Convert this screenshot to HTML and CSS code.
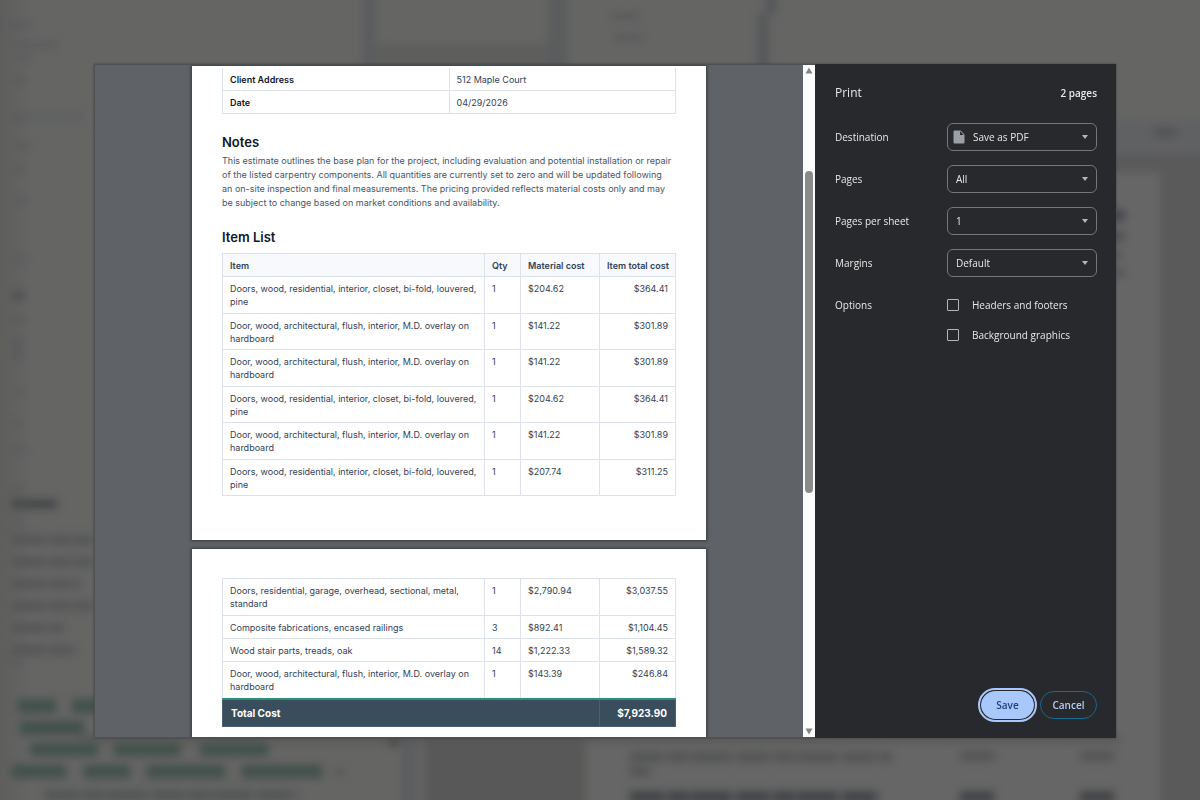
FILE: index.html
```html
<!DOCTYPE html>
<html lang="en">
<head>
<meta charset="utf-8">
<title>Print</title>
<meta name="viewport" content="width=device-width, initial-scale=1">
<link rel="stylesheet" href="styles.css">
</head>
<body>
<svg class="backdrop" viewBox="0 0 1200 800" preserveAspectRatio="none" aria-hidden="true">
  <defs>
    <filter id="soft" x="-10%" y="-10%" width="120%" height="120%" color-interpolation-filters="sRGB"><feGaussianBlur stdDeviation="4"/></filter>
    <linearGradient id="edge"><stop offset="0" stop-color="#5e5e5d"/><stop offset="1" stop-color="#656564"/></linearGradient>
  </defs>
  <rect width="1200" height="800" fill="#656564"/>
  <rect width="30" height="800" fill="url(#edge)"/>
  <g filter="url(#soft)">
    <rect x="362" y="-10" width="14" height="90" fill="#5b5d5e"/>
    <rect x="376" y="44" width="180" height="40" fill="#5e5e5d"/>
    <rect x="548" y="-10" width="20" height="90" fill="#5a5c5d"/>
    <rect x="758" y="14" width="10" height="66" fill="#545658"/>
    <rect x="766" y="-10" width="10" height="24" fill="#545658"/>
    <rect x="1100" y="120" width="120" height="34" fill="#606163"/>
    <rect x="1100" y="154" width="120" height="700" fill="#5a5a5a"/>
    <rect x="1080" y="172" width="80" height="700" fill="#666"/>
    <rect x="1154" y="128" width="22" height="9" fill="#525355"/>
    <rect x="1110" y="210" width="15" height="11" fill="#43454a"/>
    <rect x="1110" y="232" width="15" height="9" fill="#4b4d52"/>
    <rect x="1110" y="251" width="12" height="8" fill="#555457"/>
    <rect x="1110" y="269" width="15" height="8" fill="#555457"/>
    <rect x="402" y="700" width="16" height="110" fill="#5c5e61"/>
    <rect x="425" y="700" width="160" height="110" fill="#585858"/>
    <rect x="592" y="700" width="562" height="110" fill="#666"/>
    <rect x="80" y="736" width="1040" height="6" fill="#555"/>
  </g>
  <g filter="url(#soft)" fill="#5a5b5c">
    <rect x="2" y="22" width="30" height="6"/><rect x="12" y="42" width="45" height="6"/><rect x="12" y="56" width="20" height="5"/>
    <rect x="612" y="13" width="28" height="7"/><rect x="614" y="34" width="30" height="7"/>
    <rect x="12" y="77" width="14" height="6"/><rect x="12" y="112" width="72" height="10" fill="#606163"/>
    <rect x="12" y="114" width="14" height="8"/><rect x="13" y="143" width="18" height="6"/>
    <rect x="12" y="165" width="12" height="7"/><rect x="13" y="198" width="15" height="6"/>
    <rect x="12" y="256" width="16" height="6"/><rect x="12" y="291" width="13" height="9" fill="#4f5052"/>
    <rect x="12" y="316" width="13" height="8"/><rect x="12" y="336" width="10" height="25"/>
    <rect x="12" y="388" width="12" height="6"/><rect x="12" y="422" width="10" height="6"/>
    <rect x="12" y="447" width="16" height="6"/><rect x="12" y="485" width="12" height="6"/>
    <rect x="12" y="520" width="10" height="6"/><rect x="12" y="660" width="10" height="7"/>
  </g>
  <g filter="url(#soft)" fill="none" stroke-width="9" stroke-dasharray="34 3 22 2 41 4">
    <path d="M12 504H57" stroke="#434547" stroke-dasharray="none"/>
    <path d="M12 540H93M12 562H93M12 584H80M12 606H93M12 628H64M12 650H76" stroke="#545556"/>
    <path d="M45 795H298" stroke="#505254"/>
    <path d="M630 757H892M630 771H650M960 756H998M1080 756H1116" stroke="#525354"/>
    <path d="M630 797H880M960 797H994M1080 797H1116" stroke="#3f4144" stroke-width="11"/>
  </g>
  <g filter="url(#soft)" fill="#41504b">
    <rect x="18" y="699" width="38" height="14"/><rect x="72" y="699" width="30" height="14"/>
    <rect x="20" y="721" width="64" height="14"/>
    <rect x="30" y="743" width="68" height="13"/><rect x="114" y="743" width="66" height="13"/><rect x="200" y="743" width="68" height="13"/>
    <rect x="12" y="765" width="54" height="13"/><rect x="84" y="765" width="46" height="13"/><rect x="147" y="765" width="78" height="13"/><rect x="242" y="765" width="80" height="13"/>
    <rect x="336" y="769" width="7" height="6" fill="#505253"/><rect x="390" y="738" width="8" height="8" fill="#444"/>
  </g>
</svg>

<main class="stage">
  <div class="dialog" role="dialog" aria-modal="true" aria-labelledby="dialog-title">
    <section class="preview" aria-label="Print preview">
      <div class="sheets">
        <article class="sheet sheet-first">
          <table class="details">
            <tbody>
              <tr><th scope="row">Client Address</th><td>512 Maple Court</td></tr>
              <tr><th scope="row">Date</th><td>04/29/2026</td></tr>
            </tbody>
          </table>
          <h2 class="heading">Notes</h2>
          <p class="notes">This estimate outlines the base plan for the project, including evaluation and potential installation or repair<br>of the listed carpentry components. All quantities are currently set to zero and will be updated following<br>an on-site inspection and final measurements. The pricing provided reflects material costs only and may<br>be subject to change based on market conditions and availability.</p>
          <h2 class="heading heading-list">Item List</h2>
          <table class="items items-first">
            <colgroup><col class="col-item"><col class="col-qty"><col class="col-cost"><col class="col-total"></colgroup>
            <thead>
              <tr><th scope="col">Item</th><th scope="col">Qty</th><th scope="col">Material cost</th><th scope="col" class="amount">Item total cost</th></tr>
            </thead>
            <tbody>
              <tr><td>Doors, wood, residential, interior, closet, bi-fold, louvered,<br>pine</td><td>1</td><td>$204.62</td><td class="amount">$364.41</td></tr>
              <tr><td>Door, wood, architectural, flush, interior, M.D. overlay on<br>hardboard</td><td>1</td><td>$141.22</td><td class="amount">$301.89</td></tr>
              <tr><td>Door, wood, architectural, flush, interior, M.D. overlay on<br>hardboard</td><td>1</td><td>$141.22</td><td class="amount">$301.89</td></tr>
              <tr><td>Doors, wood, residential, interior, closet, bi-fold, louvered,<br>pine</td><td>1</td><td>$204.62</td><td class="amount">$364.41</td></tr>
              <tr><td>Door, wood, architectural, flush, interior, M.D. overlay on<br>hardboard</td><td>1</td><td>$141.22</td><td class="amount">$301.89</td></tr>
              <tr><td>Doors, wood, residential, interior, closet, bi-fold, louvered,<br>pine</td><td>1</td><td>$207.74</td><td class="amount">$311.25</td></tr>
            </tbody>
          </table>
        </article>
        <article class="sheet sheet-second">
          <table class="items items-second">
            <colgroup><col class="col-item"><col class="col-qty"><col class="col-cost"><col class="col-total"></colgroup>
            <tbody>
              <tr><td>Doors, residential, garage, overhead, sectional, metal,<br>standard</td><td>1</td><td>$2,790.94</td><td class="amount">$3,037.55</td></tr>
              <tr><td>Composite fabrications, encased railings</td><td>3</td><td>$892.41</td><td class="amount">$1,104.45</td></tr>
              <tr><td>Wood stair parts, treads, oak</td><td>14</td><td>$1,222.33</td><td class="amount">$1,589.32</td></tr>
              <tr><td>Door, wood, architectural, flush, interior, M.D. overlay on<br>hardboard</td><td>1</td><td>$143.39</td><td class="amount">$246.84</td></tr>
            </tbody>
            <tfoot>
              <tr><th scope="row" colspan="3">Total Cost</th><td class="amount">$7,923.90</td></tr>
            </tfoot>
          </table>
        </article>
      </div>
      <div class="scrollbar" aria-hidden="true">
        <svg class="scroll-arrow" viewBox="0 0 8 7"><path d="M4 0.5 7.5 6.5h-7z"/></svg>
        <div class="scroll-track"><div class="scroll-before"></div><div class="scroll-thumb"></div><div class="scroll-after"></div></div>
        <svg class="scroll-arrow" viewBox="0 0 8 7"><path d="M4 6.5 7.5 0.5h-7z"/></svg>
      </div>
    </section>

    <form class="settings">
      <header class="settings-head">
        <h1 class="title" id="dialog-title">Print</h1>
        <span class="count">2 pages</span>
      </header>
      <div class="fields">
        <div class="field">
          <label for="destination">Destination</label>
          <div class="picker picker-icon">
            <select id="destination"><option>Save as PDF</option></select>
            <svg class="file-icon" viewBox="0 0 12 14"><path d="M1.5 0.5H7.5L11.5 4.5V12.5a1 1 0 0 1-1 1h-9a1 1 0 0 1-1-1v-11a1 1 0 0 1 1-1z" fill="#9aa0a6"/><path d="M7 1.2V5H10.8z" fill="#28292c"/></svg>
            <svg class="caret" viewBox="0 0 6 4"><path d="M0 0h6L3 4z"/></svg>
          </div>
        </div>
        <div class="field">
          <label for="pages">Pages</label>
          <div class="picker"><select id="pages"><option>All</option></select><svg class="caret" viewBox="0 0 6 4"><path d="M0 0h6L3 4z"/></svg></div>
        </div>
        <div class="field">
          <label for="per-sheet">Pages per sheet</label>
          <div class="picker"><select id="per-sheet"><option>1</option></select><svg class="caret" viewBox="0 0 6 4"><path d="M0 0h6L3 4z"/></svg></div>
        </div>
        <div class="field">
          <label for="margins">Margins</label>
          <div class="picker"><select id="margins"><option>Default</option></select><svg class="caret" viewBox="0 0 6 4"><path d="M0 0h6L3 4z"/></svg></div>
        </div>
        <div class="field field-options" role="group" aria-labelledby="options-label">
          <span id="options-label">Options</span>
          <div class="checks">
            <label class="check"><input type="checkbox">Headers and footers</label>
            <label class="check"><input type="checkbox">Background graphics</label>
          </div>
        </div>
      </div>
      <footer class="actions">
        <button class="button button-save" type="button">Save</button>
        <button class="button button-cancel" type="button">Cancel</button>
      </footer>
    </form>
  </div>
</main>
</body>
</html>
```
FILE: styles.css
```css
* {
  box-sizing: border-box;
}

body {
  margin: 0;
  background: #656564;
  font-family: "Open Sans", "Noto Sans", sans-serif;
}

.backdrop {
  position: fixed;
  inset: 0;
  width: 100%;
  height: 100%;
}

.stage {
  position: relative;
  display: flex;
  height: 100vh;
  padding: 64px 84px 62px 94px;
}

.dialog {
  display: flex;
  flex: 1;
  min-width: 0;
  overflow: hidden;
  background: #28292c;
  box-shadow: 0 0 2px #3c3e40;
}

/* Preview */

.preview {
  display: flex;
  flex: 1;
  min-width: 0;
  background: #5f6267;
  border: solid #4e5154;
  border-width: 1px 0 1px 1px;
}

.sheets {
  display: flex;
  flex: 1;
  flex-direction: column;
  align-items: center;
  gap: 9px;
  min-width: 0;
  padding-top: 1px;
  overflow: hidden;
}

.sheet {
  flex: none;
  width: 514px;
  max-width: 100%;
  padding: 0 30px;
  background: #fff;
  box-shadow: 0 0 3px 1px #3a3b3e;
  color: #334155;
  font-family: Inter, sans-serif;
  font-size: 9px;
  line-height: 13px;
}

.sheet-first {
  padding-top: 2px;
  padding-bottom: 44px;
}

.sheet-second {
  padding-top: 29px;
  padding-bottom: 11px;
}

.sheet table {
  width: 100%;
  border-collapse: collapse;
  table-layout: fixed;
}

.sheet th,
.sheet td {
  padding: 5px 7px 4px;
  border: 1px solid #dde1ea;
  text-align: left;
  vertical-align: top;
  white-space: nowrap;
}

.details tr:first-child > * {
  border-top: 0;
}

.details th {
  color: #0f172a;
  font-weight: 600;
}

.heading {
  margin: 20px 0 4px;
  color: #0f172a;
  font-size: 13px;
  font-weight: 600;
  line-height: 16px;
}

.heading-list {
  margin-top: 19px;
  margin-bottom: 8px;
}

.notes {
  margin: 0;
  color: #475569;
  line-height: 14px;
  white-space: nowrap;
}

.items-first {
  height: 243px;
}

.items-second {
  height: 149px;
}

.items th {
  background: #f7f9fc;
  font-weight: 600;
}

.sheet .amount {
  text-align: right;
}

.col-item {
  width: 262px;
}

.col-qty {
  width: 36px;
}

.col-cost {
  width: 79px;
}

.items tfoot th,
.items tfoot td {
  padding: 7px 8px 6px;
  border-color: #4a6072;
  border-top: 2px solid #2a9079;
  background: #3a4d5d;
  color: #fff;
  font-size: 10px;
  font-weight: 700;
}

/* Scrollbar */

.scrollbar {
  display: flex;
  flex: none;
  flex-direction: column;
  align-items: center;
  width: 12px;
  padding: 2px 0;
  background: #fcfcfc;
}

.scroll-arrow {
  width: 8px;
  height: 7px;
  fill: #858585;
}

.scroll-track {
  display: flex;
  flex: 1;
  flex-direction: column;
  width: 8px;
}

.scroll-before {
  flex: 97;
}

.scroll-thumb {
  flex: 322;
  border-radius: 4px;
  background: #8b8b8b;
}

.scroll-after {
  flex: 235;
}

/* Settings */

.settings {
  display: flex;
  flex: none;
  flex-direction: column;
  width: 301px;
  padding: 19px 19px 19px 20px;
  color: #e8e8e8;
  font-size: 10px;
  line-height: 20px;
}

.settings-head {
  display: flex;
  align-items: center;
  justify-content: space-between;
  margin-bottom: 20px;
}

.title {
  margin: 0;
  font-size: 12px;
  font-weight: 400;
}

.count {
  font-weight: 600;
}

.fields {
  display: flex;
  flex: 1;
  flex-direction: column;
  gap: 14px;
}

.field {
  display: grid;
  grid-template-columns: 112px 1fr;
  align-items: center;
}

.field-options {
  align-items: start;
  padding-top: 4px;
}

.picker {
  position: relative;
}

.picker select {
  display: block;
  width: 100%;
  height: 28px;
  padding: 0 20px 0 8px;
  border: 1px solid #757678;
  border-radius: 6px;
  appearance: none;
  background: transparent;
  color: #e8e8e8;
  font: inherit;
}

.picker-icon select {
  padding-left: 25px;
}

.file-icon {
  position: absolute;
  top: 7px;
  left: 6px;
  width: 12px;
  height: 14px;
}

.caret {
  position: absolute;
  top: 12px;
  right: 9px;
  width: 6px;
  height: 4px;
  fill: #b4b6b8;
  pointer-events: none;
}

.checks {
  display: flex;
  flex-direction: column;
  gap: 10px;
}

.check {
  display: flex;
  align-items: center;
  gap: 13px;
}

.check input {
  width: 12px;
  height: 12px;
  margin: 0;
  border: 1px solid #b4b5b6;
  border-radius: 1px;
  appearance: none;
}

.actions {
  display: flex;
  justify-content: flex-end;
  gap: 6px;
}

.button {
  height: 28px;
  padding: 0;
  border: 1px solid #16698f;
  border-radius: 14px;
  font: inherit;
  font-weight: 600;
}

.button-save {
  width: 53px;
  border-color: #a8c7fa;
  outline: 2px solid #a8c7fa;
  outline-offset: 1px;
  background: #a8c7fa;
  color: #1c427c;
}

.button-cancel {
  width: 57px;
  background: transparent;
  color: #b4cbf5;
}
```
